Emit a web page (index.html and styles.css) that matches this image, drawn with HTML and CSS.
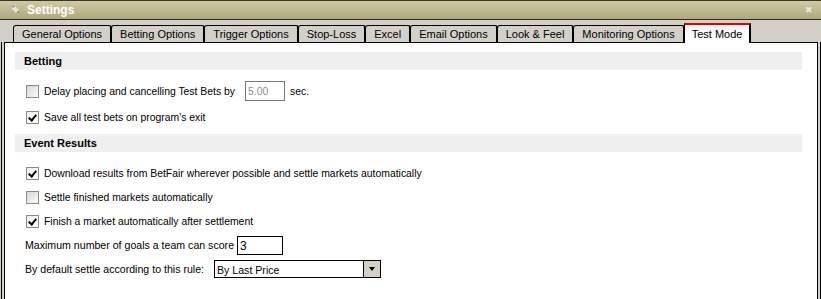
FILE: index.html
```html
<!DOCTYPE html>
<html lang="en">
<head>
	<meta charset="UTF-8">
	<title>Settings</title>
	<link rel="stylesheet" href="styles.css">
</head>
<body>
	<div class="window">
		<div class="titlebar">
			<svg class="pin" width="8" height="8" viewBox="0 0 8 8">
				<path d="M0 0 L3 0 L7 4 L7 7 L4 7 L0 3 Z" fill="#e8e6d8"/>
				<path d="M0 0 L3 0 L1 2 Z M4 7 L7 7 L7 4 Z" fill="#8d8866"/>
			</svg>
			<span class="title">Settings</span>
			<span class="close">&#x2716;</span>
		</div>

		<div class="tabs">
			<div class="tab">General Options</div>
			<div class="tab">Betting Options</div>
			<div class="tab">Trigger Options</div>
			<div class="tab">Stop-Loss</div>
			<div class="tab">Excel</div>
			<div class="tab">Email Options</div>
			<div class="tab">Look &amp; Feel</div>
			<div class="tab">Monitoring Options</div>
			<div class="tab active">Test Mode</div>
		</div>

		<div class="panel">
			<div class="section">Betting</div>
			<div class="row first">
				<span class="check"></span>
				<span>Delay placing and cancelling Test Bets by</span>
				<span class="field disabled">5.00</span>
				<span>sec.</span>
			</div>
			<div class="row">
				<span class="check on"></span>
				<span>Save all test bets on program's exit</span>
			</div>

			<div class="section lower">Event Results</div>
			<div class="row first tight">
				<span class="check on"></span>
				<span>Download results from BetFair wherever possible and settle markets automatically</span>
			</div>
			<div class="row tight">
				<span class="check"></span>
				<span>Settle finished markets automatically</span>
			</div>
			<div class="row tight">
				<span class="check on"></span>
				<span>Finish a market automatically after settlement</span>
			</div>
			<div class="row plain">
				<span class="label">Maximum number of goals a team can score</span>
				<span class="field goals">3</span>
			</div>
			<div class="row plain">
				<span class="label">By default settle according to this rule:</span>
				<span class="combo">
					<span class="combo-text">By Last Price</span>
					<span class="combo-btn"></span>
				</span>
			</div>
		</div>
	</div>
</body>
</html>
```

FILE: styles.css
```css
body {
	margin: 0;
	font-family: "Liberation Sans", Arial, sans-serif;
	font-size: 11px;
	color: #000;
	background-color: #d4d0c8;
}
.window {
	width: 821px;
	height: 299px;
	overflow: hidden;
	background-color: #d4d0c8;
}
.titlebar {
	height: 18px;
	border-top: 1px solid #3a3828;
	border-bottom: 1px solid #2e2c20;
	background: linear-gradient(#cdc9a6, #b0a97e);
	display: flex;
	align-items: center;
	padding-left: 12px;
	padding-right: 8px;
}
.pin {
	margin-right: 7px;
}
.title {
	color: #fff;
	font-weight: bold;
	font-size: 12px;
	flex: 1;
}
.close {
	color: #ebe9dc;
	font-size: 9px;
}
.tabs {
	display: flex;
	padding-left: 13px;
	padding-top: 4px;
	height: 18px;
	align-items: flex-end;
	position: relative;
	z-index: 1;
}
.tab {
	height: 16px;
	line-height: 17px;
	padding: 0 8px;
	border: 1px solid #000;
	border-bottom: none;
	border-right-width: 2px;
	border-radius: 3px 3px 0 0;
	font-size: 11px;
}
.tab + .tab {
	margin-left: -1px;
}
.tab.active {
	height: 18px;
	line-height: 19px;
	background: linear-gradient(#f2f2f2, #fff 60%);
	border-top: 2px solid #e00000;
	border-radius: 0;
	margin-bottom: -1px;
	padding: 0 7px;
}
.panel {
	margin-left: 1px;
	height: 300px;
	background-color: #fff;
	padding: 10px 18px 0 13px;
	border-left: 1px solid #000;
	border-right: 1px solid #000;
	box-shadow: inset 2px 0 0 #d4d0c8, inset 3px 0 0 #000, inset -2px 0 0 #d4d0c8, inset -3px 0 0 #000, inset 0 1px 0 #000;
}
.section {
	height: 18px;
	line-height: 18px;
	background-color: #efefef;
	font-weight: bold;
	padding-left: 9px;
	font-size: 11px;
}
.section.lower {
	margin-top: 4px;
}
.section + .row {
	margin-top: 8px;
}
.section.lower + .row {
	margin-top: 9px;
}
.row {
	display: flex;
	align-items: center;
	height: 26px;
	padding-left: 11px;
	font-size: 10.4px;
}
.row.tight {
	height: 24px;
}
.row.plain {
	height: 24px;
	padding-left: 10px;
	font-size: 10.6px;
}
.check {
	width: 11px;
	height: 11px;
	border: 1px solid #8a8a8a;
	background: linear-gradient(135deg, #d9d8d2, #fbfbfa);
	margin-right: 5px;
	position: relative;
}
.check.on {
	background: linear-gradient(135deg, #ecebe6, #fff);
}
.check.on::after {
	content: "";
	position: absolute;
	left: 3px;
	top: 1px;
	width: 3px;
	height: 6px;
	border: solid #000;
	border-width: 0 2px 2px 0;
	transform: rotate(40deg);
}
.field {
	border: 1px solid #000;
	height: 18px;
	line-height: 18px;
	padding-left: 2px;
	background-color: #fff;
	box-sizing: border-box;
}
.field.disabled {
	width: 40px;
	color: #8c8c8c;
	margin: 0 5px 0 10px;
	height: 20px;
	line-height: 19px;
	border-color: #777;
}
.field.goals {
	width: 46px;
	height: 19px;
	margin-left: 3px;
	font-size: 12px;
}
.combo {
	display: flex;
	width: 167px;
	height: 18px;
	border: 1px solid #000;
	margin-left: 10px;
	box-sizing: border-box;
	background-color: #fff;
}
.combo-text {
	flex: 1;
	line-height: 17px;
	padding-left: 2px;
	padding-top: 1px;
}
.combo-btn {
	width: 16px;
	border-left: 1px solid #000;
	background-color: #d4d0c8;
	position: relative;
}
.combo-btn::after {
	content: "";
	position: absolute;
	left: 5px;
	top: 6px;
	border-left: 3px solid transparent;
	border-right: 3px solid transparent;
	border-top: 4px solid #000;
}
```
